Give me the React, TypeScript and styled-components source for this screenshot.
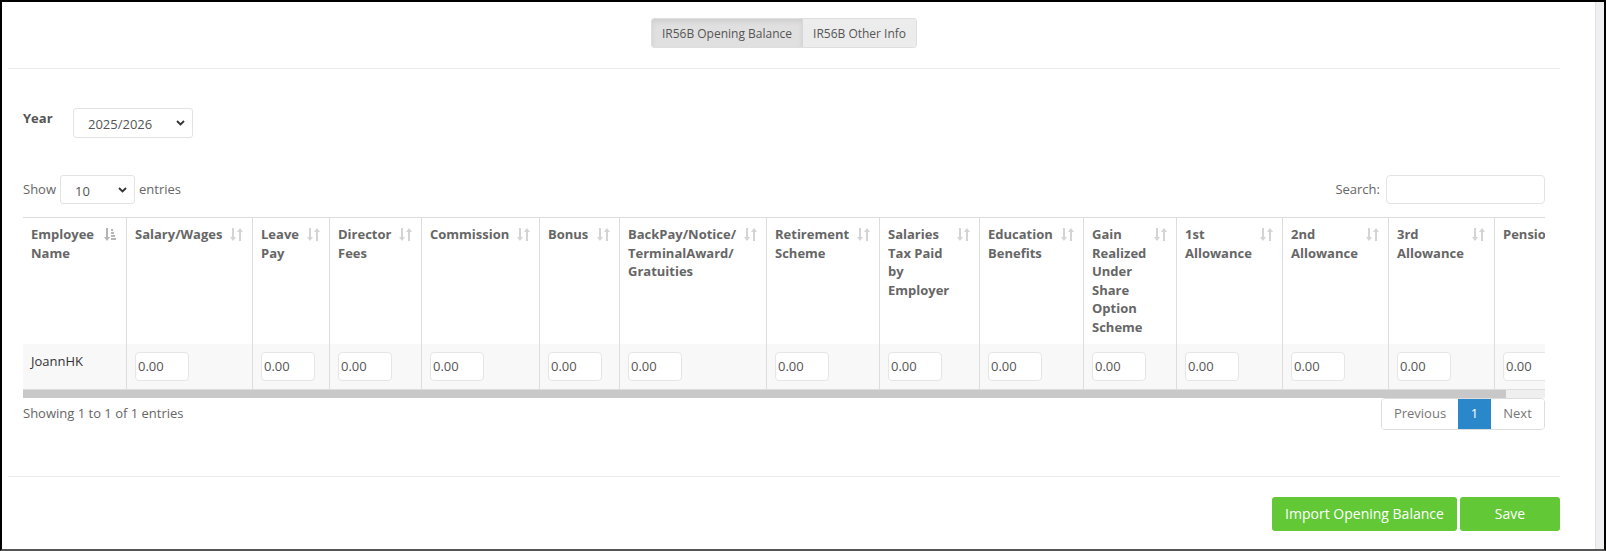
import React from 'react';
import styled, { createGlobalStyle, css } from 'styled-components';

const GlobalStyle = createGlobalStyle`
  html, body {
    margin: 0;
    padding: 0;
    background: #fff;
  }
  body {
    font-family: "Open Sans", "Liberation Sans", sans-serif;
    font-size: 13px;
    line-height: 1.42857;
    color: #666;
  }
  * {
    box-sizing: border-box;
  }
`;

interface column {
  title: string,
  width: number,
  sorted?: boolean,
}

const columns: column[] = [
  { title: 'Employee Name', width: 104, sorted: true },
  { title: 'Salary/Wages', width: 126 },
  { title: 'Leave Pay', width: 77 },
  { title: 'Director Fees', width: 92 },
  { title: 'Commission', width: 118 },
  { title: 'Bonus', width: 80 },
  { title: 'BackPay/Notice/\u200BTerminalAward/\u200BGratuities', width: 147 },
  { title: 'Retirement Scheme', width: 113 },
  { title: 'Salaries Tax Paid by Employer', width: 100 },
  { title: 'Education Benefits', width: 104 },
  { title: 'Gain Realized Under Share Option Scheme', width: 93 },
  { title: '1st Allowance', width: 106 },
  { title: '2nd Allowance', width: 106 },
  { title: '3rd Allowance', width: 106 },
  { title: 'Pension', width: 90 },
];

const viewWidth = 1522;
const tableWidth = columns.reduce((sum, c) => sum + c.width, 0);

const Frame = styled.div`
  display: flex;
  width: 1606px;
  height: 551px;
  border: 2px solid #000;
  border-bottom-color: #555;
  overflow: hidden;
`;

const Main = styled.div`
  flex: 1;
  min-width: 0;
`;

const PageScroll = styled.div`
  width: 9px;
  background: #f0f0f3;
  border-left: 1px solid #e2e2e6;
`;

const Panel = styled.div`
  width: 1552px;
  margin-left: 6px;
  padding-top: 16px;
`;

const TabBar = styled.div`
  display: flex;
  justify-content: center;
`;

const TabGroup = styled.div`
  display: flex;
  border: 1px solid #dedede;
  border-radius: 3px;
  overflow: hidden;
`;

const Tab = styled.button<{ $active?: boolean }>`
  height: 28px;
  padding: 0 10px;
  border: 0;
  font-family: inherit;
  font-size: 12px;
  color: #555;
  background: #ececec;
  cursor: pointer;
  ${(p) => p.$active && css`
    background: #e0e0e0;
    box-shadow: inset 0 3px 5px rgba(0, 0, 0, 0.08);
    border-right: 1px solid #d6d6d6;
  `}
`;

const Rule = styled.hr<{ $top: number }>`
  margin: ${(p) => p.$top}px 0 0;
  border: 0;
  border-top: 1px solid #eaeaea;
  height: 0;
`;

const Content = styled.div`
  padding: 0 15px;
`;

const YearRow = styled.div`
  display: flex;
  align-items: flex-start;
  margin-top: 39px;
`;

const FieldLabel = styled.label`
  width: 50px;
  margin-top: 1px;
  font-weight: bold;
  color: #555;
`;

const SelectWrap = styled.div`
  position: relative;
  display: inline-block;
`;

const NativeSelect = styled.select<{ $width: number, $height: number }>`
  appearance: none;
  width: ${(p) => p.$width}px;
  height: ${(p) => p.$height}px;
  padding: 2px 0 0 14px;
  border: 1px solid #e3e3e3;
  border-radius: 3px;
  background: #fff;
  font-family: inherit;
  font-size: 13px;
  color: #555;
`;

const Chevron = styled.svg`
  position: absolute;
  right: 8px;
  top: 50%;
  margin-top: -3px;
  pointer-events: none;
`;

const ToolRow = styled.div`
  display: flex;
  align-items: center;
  justify-content: space-between;
  margin-top: 37px;
  height: 29px;
`;

const LengthControl = styled.div`
  display: flex;
  align-items: center;
  gap: 4px;
`;

const SearchControl = styled.label`
  display: flex;
  align-items: center;
  gap: 6px;
`;

const SearchInput = styled.input`
  width: 159px;
  height: 29px;
  border: 1px solid #e3e3e3;
  border-radius: 4px;
  font-family: inherit;
  font-size: 13px;
`;

const TableScroll = styled.div`
  margin-top: 13px;
  width: ${viewWidth}px;
  overflow: hidden;
`;

const ScrollTrack = styled.div`
  width: ${viewWidth}px;
  height: 8px;
  background: #efefef;
`;

const ScrollThumb = styled.div`
  height: 100%;
  background: #c8c8c8;
`;

const Table = styled.table`
  table-layout: fixed;
  border-collapse: separate;
  border-spacing: 0;
  border-top: 1px solid #dddddd;
`;

const HeadCell = styled.th`
  position: relative;
  padding: 7px 30px 7px 8px;
  vertical-align: top;
  text-align: left;
  font-weight: bold;
  color: #666;
  line-height: 18.6px;
  border-right: 1px solid #dddddd;
  background: #fff;
  &:last-child {
    border-right: 0;
  }
`;

const SortIcon = styled.svg`
  position: absolute;
  right: 9px;
  top: 10px;
`;

const BodyRow = styled.tr`
  background: #f8f8f8;
`;

const BodyCell = styled.td`
  padding: 8px;
  vertical-align: top;
  color: #333;
  border-right: 1px solid #dddddd;
  border-bottom: 1px solid #dddddd;
  &:last-child {
    border-right: 0;
  }
`;

const AmountInput = styled.input`
  display: block;
  width: 54px;
  height: 29px;
  padding: 0 2px;
  border: 1px solid #e6e6e6;
  border-radius: 4px;
  background: #fff;
  font-family: inherit;
  font-size: 13px;
  color: #555;
`;

const FooterRow = styled.div`
  display: flex;
  align-items: center;
  justify-content: space-between;
  height: 32px;
`;

const Pager = styled.div`
  display: flex;
  border: 1px solid #dddddd;
  border-radius: 4px;
  overflow: hidden;
  height: 32px;
`;

const PageButton = styled.span<{ $active?: boolean, $width: number }>`
  display: flex;
  align-items: center;
  justify-content: center;
  width: ${(p) => p.$width}px;
  color: #777;
  background: #fff;
  ${(p) => p.$active && css`
    background: #2a87c9;
    color: #fff;
  `}
`;

const Actions = styled.div`
  display: flex;
  justify-content: flex-end;
  gap: 3px;
  margin-top: 20px;
`;

const GreenButton = styled.button<{ $width: number }>`
  width: ${(p) => p.$width}px;
  height: 34px;
  border: 0;
  border-radius: 3px;
  background: #62c836;
  color: #fff;
  font-family: inherit;
  font-size: 14px;
  cursor: pointer;
`;

function SortGlyph(props: { sorted?: boolean }) {
  if (props.sorted) {
    return (
      <SortIcon width="13" height="14" viewBox="0 0 13 14" fill="#b5b5b5">
        <path d="M2 0h2v9h2l-3 4-3-4h2z" />
        <rect x="7" y="1" width="2" height="2" />
        <rect x="7" y="4" width="3" height="2" />
        <rect x="7" y="7" width="4" height="2" />
        <rect x="7" y="10" width="5" height="2" />
      </SortIcon>
    );
  }
  return (
    <SortIcon width="13" height="14" viewBox="0 0 13 14" fill="#d4d4d4">
      <path d="M2 0h2v9h2l-3 4-3-4h2z" />
      <path d="M9 13h2V4h2l-3-4-3 4h2z" />
    </SortIcon>
  );
}

function DownChevron() {
  return (
    <Chevron width="9" height="6" viewBox="0 0 9 6">
      <path d="M1 1l3.5 3.5L8 1" fill="none" stroke="#333" strokeWidth="1.8" />
    </Chevron>
  );
}

export default function App() {
  return (
    <>
      <GlobalStyle />
      <Frame>
        <Main>
          <Panel>
            <TabBar>
              <TabGroup>
                <Tab $active type="button">IR56B Opening Balance</Tab>
                <Tab type="button">IR56B Other Info</Tab>
              </TabGroup>
            </TabBar>
            <Rule $top={20} />
            <Content>
              <YearRow>
                <FieldLabel>Year</FieldLabel>
                <SelectWrap>
                  <NativeSelect $width={120} $height={30} defaultValue="2025/2026">
                    <option>2025/2026</option>
                  </NativeSelect>
                  <DownChevron />
                </SelectWrap>
              </YearRow>
              <ToolRow>
                <LengthControl>
                  Show
                  <SelectWrap>
                    <NativeSelect $width={75} $height={29} defaultValue="10">
                      <option>10</option>
                    </NativeSelect>
                    <DownChevron />
                  </SelectWrap>
                  entries
                </LengthControl>
                <SearchControl>
                  Search:
                  <SearchInput type="search" />
                </SearchControl>
              </ToolRow>
              <TableScroll>
                <Table style={{ width: tableWidth }}>
                  <colgroup>
                    {columns.map((c) => <col key={c.title} style={{ width: c.width }} />)}
                  </colgroup>
                  <thead>
                    <tr>
                      {columns.map((c) => (
                        <HeadCell key={c.title}>
                          {c.title}
                          <SortGlyph sorted={c.sorted} />
                        </HeadCell>
                      ))}
                    </tr>
                  </thead>
                  <tbody>
                    <BodyRow>
                      <BodyCell>JoannHK</BodyCell>
                      {columns.slice(1).map((c) => (
                        <BodyCell key={c.title}>
                          <AmountInput defaultValue="0.00" />
                        </BodyCell>
                      ))}
                    </BodyRow>
                  </tbody>
                </Table>
              </TableScroll>
              <ScrollTrack>
                <ScrollThumb style={{ width: (viewWidth * viewWidth) / tableWidth }} />
              </ScrollTrack>
              <FooterRow>
                <span>Showing 1 to 1 of 1 entries</span>
                <Pager>
                  <PageButton $width={76}>Previous</PageButton>
                  <PageButton $width={33} $active>1</PageButton>
                  <PageButton $width={53}>Next</PageButton>
                </Pager>
              </FooterRow>
            </Content>
            <Rule $top={46} />
            <Actions>
              <GreenButton $width={185} type="button">Import Opening Balance</GreenButton>
              <GreenButton $width={100} type="button">Save</GreenButton>
            </Actions>
          </Panel>
        </Main>
        <PageScroll />
      </Frame>
    </>
  );
}
